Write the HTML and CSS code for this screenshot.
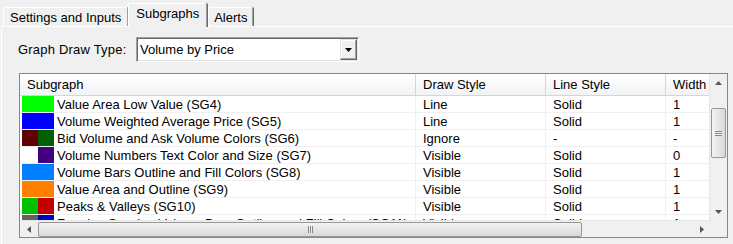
FILE: index.html
```html
<!DOCTYPE html>
<html lang="en">
<head>
  <meta charset="UTF-8" />
  <title>Subgraphs</title>
  <link rel="stylesheet" href="styles.css">
</head>
<body>

  <div class="tabs">
    <div class="tab">Settings and Inputs</div>
    <div class="tab active">Subgraphs</div>
    <div class="tab tab-alerts">Alerts</div>
  </div>

  <div class="panel">
    <div class="field">
      <label>Graph Draw Type:</label>
      <div class="combo">
        <span class="combo-text">Volume by Price</span>
        <span class="combo-btn">
          <svg width="7" height="4" viewBox="0 0 7 4"><path d="M0 0h7L3.5 4z" fill="#000"/></svg>
        </span>
      </div>
    </div>

    <div class="list">
      <div class="list-main">
        <div class="grid">
          <div class="row head">
            <div class="cell c1">Subgraph</div>
            <div class="cell c2">Draw Style</div>
            <div class="cell c3">Line Style</div>
            <div class="cell c4">Width</div>
          </div>

          <div class="row">
            <div class="cell c1"><span class="swatch"><i class="full" style="background:#00ff00"></i></span>Value Area Low Value (SG4)</div>
            <div class="cell c2">Line</div>
            <div class="cell c3">Solid</div>
            <div class="cell c4">1</div>
          </div>
          <div class="row">
            <div class="cell c1"><span class="swatch"><i class="full" style="background:#0000ff"></i></span>Volume Weighted Average Price (SG5)</div>
            <div class="cell c2">Line</div>
            <div class="cell c3">Solid</div>
            <div class="cell c4">1</div>
          </div>
          <div class="row">
            <div class="cell c1"><span class="swatch"><i style="background:#600000"></i><i style="background:#006000"></i></span>Bid Volume and Ask Volume Colors (SG6)</div>
            <div class="cell c2">Ignore</div>
            <div class="cell c3">-</div>
            <div class="cell c4">-</div>
          </div>
          <div class="row">
            <div class="cell c1"><span class="swatch"><i style="background:#ffffff"></i><i style="background:#400080"></i></span>Volume Numbers Text Color and Size (SG7)</div>
            <div class="cell c2">Visible</div>
            <div class="cell c3">Solid</div>
            <div class="cell c4">0</div>
          </div>
          <div class="row">
            <div class="cell c1"><span class="swatch"><i class="full" style="background:#0080ff"></i></span>Volume Bars Outline and Fill Colors (SG8)</div>
            <div class="cell c2">Visible</div>
            <div class="cell c3">Solid</div>
            <div class="cell c4">1</div>
          </div>
          <div class="row">
            <div class="cell c1"><span class="swatch"><i class="full" style="background:#ff8000"></i></span>Value Area and Outline (SG9)</div>
            <div class="cell c2">Visible</div>
            <div class="cell c3">Solid</div>
            <div class="cell c4">1</div>
          </div>
          <div class="row">
            <div class="cell c1"><span class="swatch"><i style="background:#00c000"></i><i style="background:#c00000"></i></span>Peaks &amp; Valleys (SG10)</div>
            <div class="cell c2">Visible</div>
            <div class="cell c3">Solid</div>
            <div class="cell c4">1</div>
          </div>
          <div class="row">
            <div class="cell c1"><span class="swatch"><i style="background:#606060"></i><i style="background:#0000c0"></i></span>Forming Session Volume Bars Outline and Fill Colors (SG11)</div>
            <div class="cell c2">Visible</div>
            <div class="cell c3">Solid</div>
            <div class="cell c4">1</div>
          </div>
        </div>

        <div class="vscroll">
          <div class="arrow">
            <svg width="7" height="4" viewBox="0 0 7 4"><path d="M3.5 0L7 4H0z" fill="#555"/></svg>
          </div>
          <div class="track vtrack">
            <div class="thumb vthumb"><span class="grip"></span></div>
          </div>
          <div class="arrow">
            <svg width="7" height="4" viewBox="0 0 7 4"><path d="M0 0h7L3.5 4z" fill="#555"/></svg>
          </div>
        </div>
      </div>

      <div class="hscroll-row">
        <div class="hscroll">
          <div class="arrow">
            <svg width="4" height="7" viewBox="0 0 4 7"><path d="M0 3.5L4 0v7z" fill="#555"/></svg>
          </div>
          <div class="track htrack">
            <div class="thumb hthumb"><span class="grip"></span></div>
          </div>
          <div class="arrow">
            <svg width="4" height="7" viewBox="0 0 4 7"><path d="M4 3.5L0 0v7z" fill="#555"/></svg>
          </div>
        </div>
        <div class="corner"></div>
      </div>
    </div>
  </div>

</body>
</html>
```

FILE: styles.css
```css
body {
  margin: 0;
  background: #f0f0f0;
  font-family: "Liberation Sans", Arial, sans-serif;
  font-size: 13px;
  color: #000;
  overflow: hidden;
}

/* tabs */
.tabs {
  display: flex;
  align-items: flex-end;
  height: 26px;
  padding-left: 3px;
  position: relative;
  z-index: 1;
}
.tab {
  box-sizing: border-box;
  height: 19px;
  line-height: 20px;
  padding: 0 6px;
  white-space: nowrap;
  border-top: 1px solid #fff;
  border-left: 1px solid #fff;
  border-right: 1px solid #a0a0a0;
  box-shadow: 1px 0 0 #696969;
  border-radius: 2px 2px 0 0;
}
.tab.active {
  height: 24px;
  line-height: 19px;
  padding: 0 7px;
  margin-bottom: -1px;
  background: #f0f0f0;
}
.tab-alerts {
  padding: 0 5px 0 5px;
  margin-left: 1px;
}

/* panel */
.panel {
  box-sizing: border-box;
  margin-left: 1px;
  border-top: 1px solid #fff;
  border-left: 1px solid #fff;
  padding: 10px 0 0 16px;
  height: calc(100vh - 26px);
}
.field {
  display: flex;
  align-items: center;
}
.field label {
  width: 118px;
  letter-spacing: 0.2px;
}
.combo {
  box-sizing: border-box;
  width: 223px;
  height: 25px;
  display: flex;
  align-items: center;
  background: #fff;
  border: 1px solid;
  border-color: #a0a0a0 #fff #fff #a0a0a0;
  box-shadow: inset 1px 1px 0 #696969, inset -1px -1px 0 #e3e3e3;
}
.combo-text {
  flex: 1;
  padding-left: 3px;
}
.combo-btn {
  box-sizing: border-box;
  width: 17px;
  height: 21px;
  margin-right: 1px;
  display: flex;
  align-items: center;
  justify-content: center;
  background: #f0f0f0;
  border: 1px solid;
  border-color: #e3e3e3 #696969 #696969 #e3e3e3;
  box-shadow: inset -1px -1px 0 #a0a0a0, inset 1px 1px 0 #fff;
}

/* list view */
.list {
  margin: 11px 0 0 1px;
  width: 709px;
  box-sizing: border-box;
  border: 1px solid #828790;
  background: #fff;
}
.list-main {
  display: flex;
  height: 146px;
}
.grid {
  width: 690px;
  overflow: hidden;
}
.row {
  display: flex;
  height: 17px;
  box-sizing: border-box;
  border-bottom: 1px solid #f0f0f0;
  white-space: nowrap;
}
.cell {
  box-sizing: border-box;
  padding: 1px 0 0 7px;
  line-height: 16px;
  overflow-x: clip;
  overflow-y: visible;
  border-right: 1px solid #f0f0f0;
  flex: none;
}
.c1 { width: 396px; padding-left: 2px; display: flex; align-items: flex-start; }
.c2 { width: 130px; }
.c3 { width: 120px; }
.c4 { width: 44px; border-right: none; }

.head {
  height: 22px;
  border-bottom: 1px solid #d5d5d5;
  background: linear-gradient(#ffffff, #f2f3f5);
}
.head .cell {
  padding-top: 0;
  line-height: 21px;
  padding-left: 7px;
  border-right: 1px solid #d5d5d5;
}
.head .c4 { border-right: 1px solid #d5d5d5; }

.swatch {
  display: flex;
  width: 32px;
  height: 16px;
  margin: -1px 3px 0 0;
  flex: none;
}
.swatch i {
  width: 16px;
  height: 16px;
}
.swatch i:first-child { width: 17px; }
.swatch i.full { width: 32px; }

/* scrollbars */
.vscroll {
  width: 17px;
  display: flex;
  flex-direction: column;
  background: #f0f0f0;
  border-left: 1px solid #e6e6e6;
}
.arrow {
  width: 17px;
  height: 17px;
  display: flex;
  align-items: center;
  justify-content: center;
  flex: none;
}
.track {
  flex: 1;
  display: flex;
}
.vtrack {
  flex-direction: column;
  padding-top: 17px;
}
.thumb {
  box-sizing: border-box;
  border: 1px solid #979797;
  border-radius: 2px;
  display: flex;
  align-items: center;
  justify-content: center;
}
.vthumb {
  width: 15px;
  height: 50px;
  margin-left: 1px;
  background: linear-gradient(90deg, #f3f3f3, #e6e6e6 50%, #d8d8d8);
}
.vthumb .grip {
  width: 7px;
  height: 5px;
  background: repeating-linear-gradient(#888 0 1px, #eee 1px 2px);
}
.hscroll-row {
  display: flex;
  height: 17px;
}
.hscroll {
  width: 690px;
  display: flex;
  background: #f0f0f0;
  border-top: 1px solid #e6e6e6;
  box-sizing: border-box;
}
.hscroll .arrow {
  width: 17px;
  height: 16px;
}
.htrack {
  align-items: center;
}
.hthumb {
  width: 544px;
  height: 15px;
  margin-left: 1px;
  background: linear-gradient(#f3f3f3, #e6e6e6 50%, #d8d8d8);
}
.hthumb .grip {
  width: 5px;
  height: 7px;
  background: repeating-linear-gradient(90deg, #888 0 1px, #eee 1px 2px);
}
.corner {
  width: 17px;
  background: #f0f0f0;
}
```
